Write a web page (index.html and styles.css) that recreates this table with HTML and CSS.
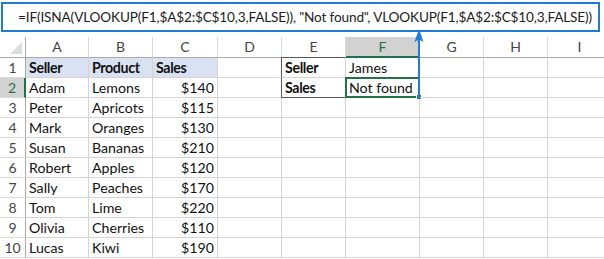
FILE: index.html
```html
<!DOCTYPE html>
<html lang="en">
<head>
<meta charset="utf-8">
<title>VLOOKUP with ISNA</title>
<link rel="stylesheet" href="styles.css">
</head>
<body>
<div class="sheet">
  <div class="formula-bar">=IF(ISNA(VLOOKUP(F1,$A$2:$C$10,3,FALSE)), "Not found", VLOOKUP(F1,$A$2:$C$10,3,FALSE))</div>

  <div class="grid">
    <div class="corner"><span class="corner-tri"></span></div>
    <div class="colhead">A</div>
    <div class="colhead">B</div>
    <div class="colhead">C</div>
    <div class="colhead">D</div>
    <div class="colhead">E</div>
    <div class="colhead colhead-active">F</div>
    <div class="colhead">G</div>
    <div class="colhead">H</div>
    <div class="colhead">I</div>

    <div class="rowhead">1</div>
    <div class="cell hdr">Seller</div>
    <div class="cell hdr">Product</div>
    <div class="cell hdr">Sales</div>
    <div class="cell"></div>
    <div class="cell label label-top">Seller</div>
    <div class="cell value-top">James</div>
    <div class="cell"></div><div class="cell"></div><div class="cell"></div>

    <div class="rowhead rowhead-active">2</div>
    <div class="cell">Adam</div>
    <div class="cell">Lemons</div>
    <div class="cell num">$140</div>
    <div class="cell"></div>
    <div class="cell label label-bottom">Sales</div>
    <div class="cell value-bottom selected">Not found<span class="fill-handle"></span></div>
    <div class="cell"></div><div class="cell"></div><div class="cell"></div>

    <div class="rowhead">3</div>
    <div class="cell">Peter</div><div class="cell">Apricots</div><div class="cell num">$115</div>
    <div class="cell"></div><div class="cell"></div><div class="cell"></div><div class="cell"></div><div class="cell"></div><div class="cell"></div>

    <div class="rowhead">4</div>
    <div class="cell">Mark</div><div class="cell">Oranges</div><div class="cell num">$130</div>
    <div class="cell"></div><div class="cell"></div><div class="cell"></div><div class="cell"></div><div class="cell"></div><div class="cell"></div>

    <div class="rowhead">5</div>
    <div class="cell">Susan</div><div class="cell">Bananas</div><div class="cell num">$210</div>
    <div class="cell"></div><div class="cell"></div><div class="cell"></div><div class="cell"></div><div class="cell"></div><div class="cell"></div>

    <div class="rowhead">6</div>
    <div class="cell">Robert</div><div class="cell">Apples</div><div class="cell num">$120</div>
    <div class="cell"></div><div class="cell"></div><div class="cell"></div><div class="cell"></div><div class="cell"></div><div class="cell"></div>

    <div class="rowhead">7</div>
    <div class="cell">Sally</div><div class="cell">Peaches</div><div class="cell num">$170</div>
    <div class="cell"></div><div class="cell"></div><div class="cell"></div><div class="cell"></div><div class="cell"></div><div class="cell"></div>

    <div class="rowhead">8</div>
    <div class="cell">Tom</div><div class="cell">Lime</div><div class="cell num">$220</div>
    <div class="cell"></div><div class="cell"></div><div class="cell"></div><div class="cell"></div><div class="cell"></div><div class="cell"></div>

    <div class="rowhead">9</div>
    <div class="cell">Olivia</div><div class="cell">Cherries</div><div class="cell num">$110</div>
    <div class="cell"></div><div class="cell"></div><div class="cell"></div><div class="cell"></div><div class="cell"></div><div class="cell"></div>

    <div class="rowhead">10</div>
    <div class="cell">Lucas</div><div class="cell">Kiwi</div><div class="cell num">$190</div>
    <div class="cell"></div><div class="cell"></div><div class="cell"></div><div class="cell"></div><div class="cell"></div><div class="cell"></div>
  </div>

  <!-- arrow pointing from the result cell up to the formula -->
  <svg class="arrow" width="12" height="70" viewBox="0 0 12 70">
    <path d="M6 0 L10.5 13 L6 10.5 L1.5 13 Z" fill="#1f7bd6"/>
    <rect x="5" y="8" width="2" height="62" fill="#1f7bd6"/>
  </svg>
</div>
</body>
</html>
```

FILE: styles.css
```css
* { box-sizing: border-box; }

html, body {
  margin: 0;
  padding: 0;
  background: #ffffff;
}

body {
  font-family: Lato, "Open Sans", sans-serif;
  color: #1a1a1a;
  overflow: hidden;
}

.sheet {
  position: relative;
  width: 604px;
  height: 259px;
  padding-top: 2px;
  overflow: hidden;
}

/* formula bar */
.formula-bar {
  margin-left: 1px;
  width: 599px;
  height: 30px;
  border: 2px solid #1f7bd6;
  padding-left: 15px;
  font-size: 13.6px;
  letter-spacing: -0.15px;
  line-height: 26px;
  color: #222;
  white-space: nowrap;
  overflow: hidden;
}

/* worksheet grid */
.grid {
  margin-top: 5px;
  display: grid;
  grid-template-columns: 26px 63px 64px 65px 64px 64px 74px 64px 64px 64px;
  grid-template-rows: 21px repeat(10, 20px);
  width: 652px;
}

.corner {
  position: relative;
  border-right: 1px solid #ababab;
  border-bottom: 1px solid #ababab;
}

.corner-tri {
  position: absolute;
  right: 3px;
  bottom: 3px;
  width: 0;
  height: 0;
  border-left: 12px solid transparent;
  border-bottom: 12px solid #dcdcdc;
}

.colhead {
  border-right: 1px solid #dadada;
  border-bottom: 1px solid #ababab;
  text-align: center;
  font-size: 14px;
  line-height: 20px;
  color: #444;
}

.colhead-active {
  background: #d2d2d2;
  color: #217346;
  border-bottom: 2px solid #217346;
  border-right-color: #c4c4c4;
}

.rowhead {
  border-right: 1px solid #ababab;
  border-bottom: 1px solid #dadada;
  text-align: center;
  font-size: 14px;
  line-height: 19px;
  color: #444;
}

.rowhead-active {
  background: #d2d2d2;
  color: #217346;
  border-right: 2px solid #217346;
}

.cell {
  position: relative;
  border-right: 1px solid #d4d4d4;
  border-bottom: 1px solid #d4d4d4;
  padding: 0 3px;
  font-size: 14.2px;
  line-height: 19px;
  white-space: nowrap;
  color: #111;
}

.hdr {
  background: #d9e1f2;
  font-weight: bold;
  letter-spacing: -0.35px;
}

.num { text-align: right; }

.label {
  font-weight: bold;
  letter-spacing: -0.35px;
  border-left: 1px solid #5a5a5a;
  margin-left: -1px;
}

.label-top { border-top: 1px solid #5a5a5a; margin-top: -1px; }
.label-bottom { border-bottom-color: #5a5a5a; }

.value-top {
  border-top: 1px solid #217346;
  margin-top: -1px;
}

.selected {
  border: 2px solid #217346;
  margin: -1px 0 0 -1px;
  padding-left: 2px;
  line-height: 17px;
}

.fill-handle {
  position: absolute;
  right: -4px;
  bottom: -4px;
  width: 6px;
  height: 6px;
  background: #217346;
  border: 1px solid #ffffff;
}

.arrow {
  position: absolute;
  left: 413px;
  top: 29px;
}
```
